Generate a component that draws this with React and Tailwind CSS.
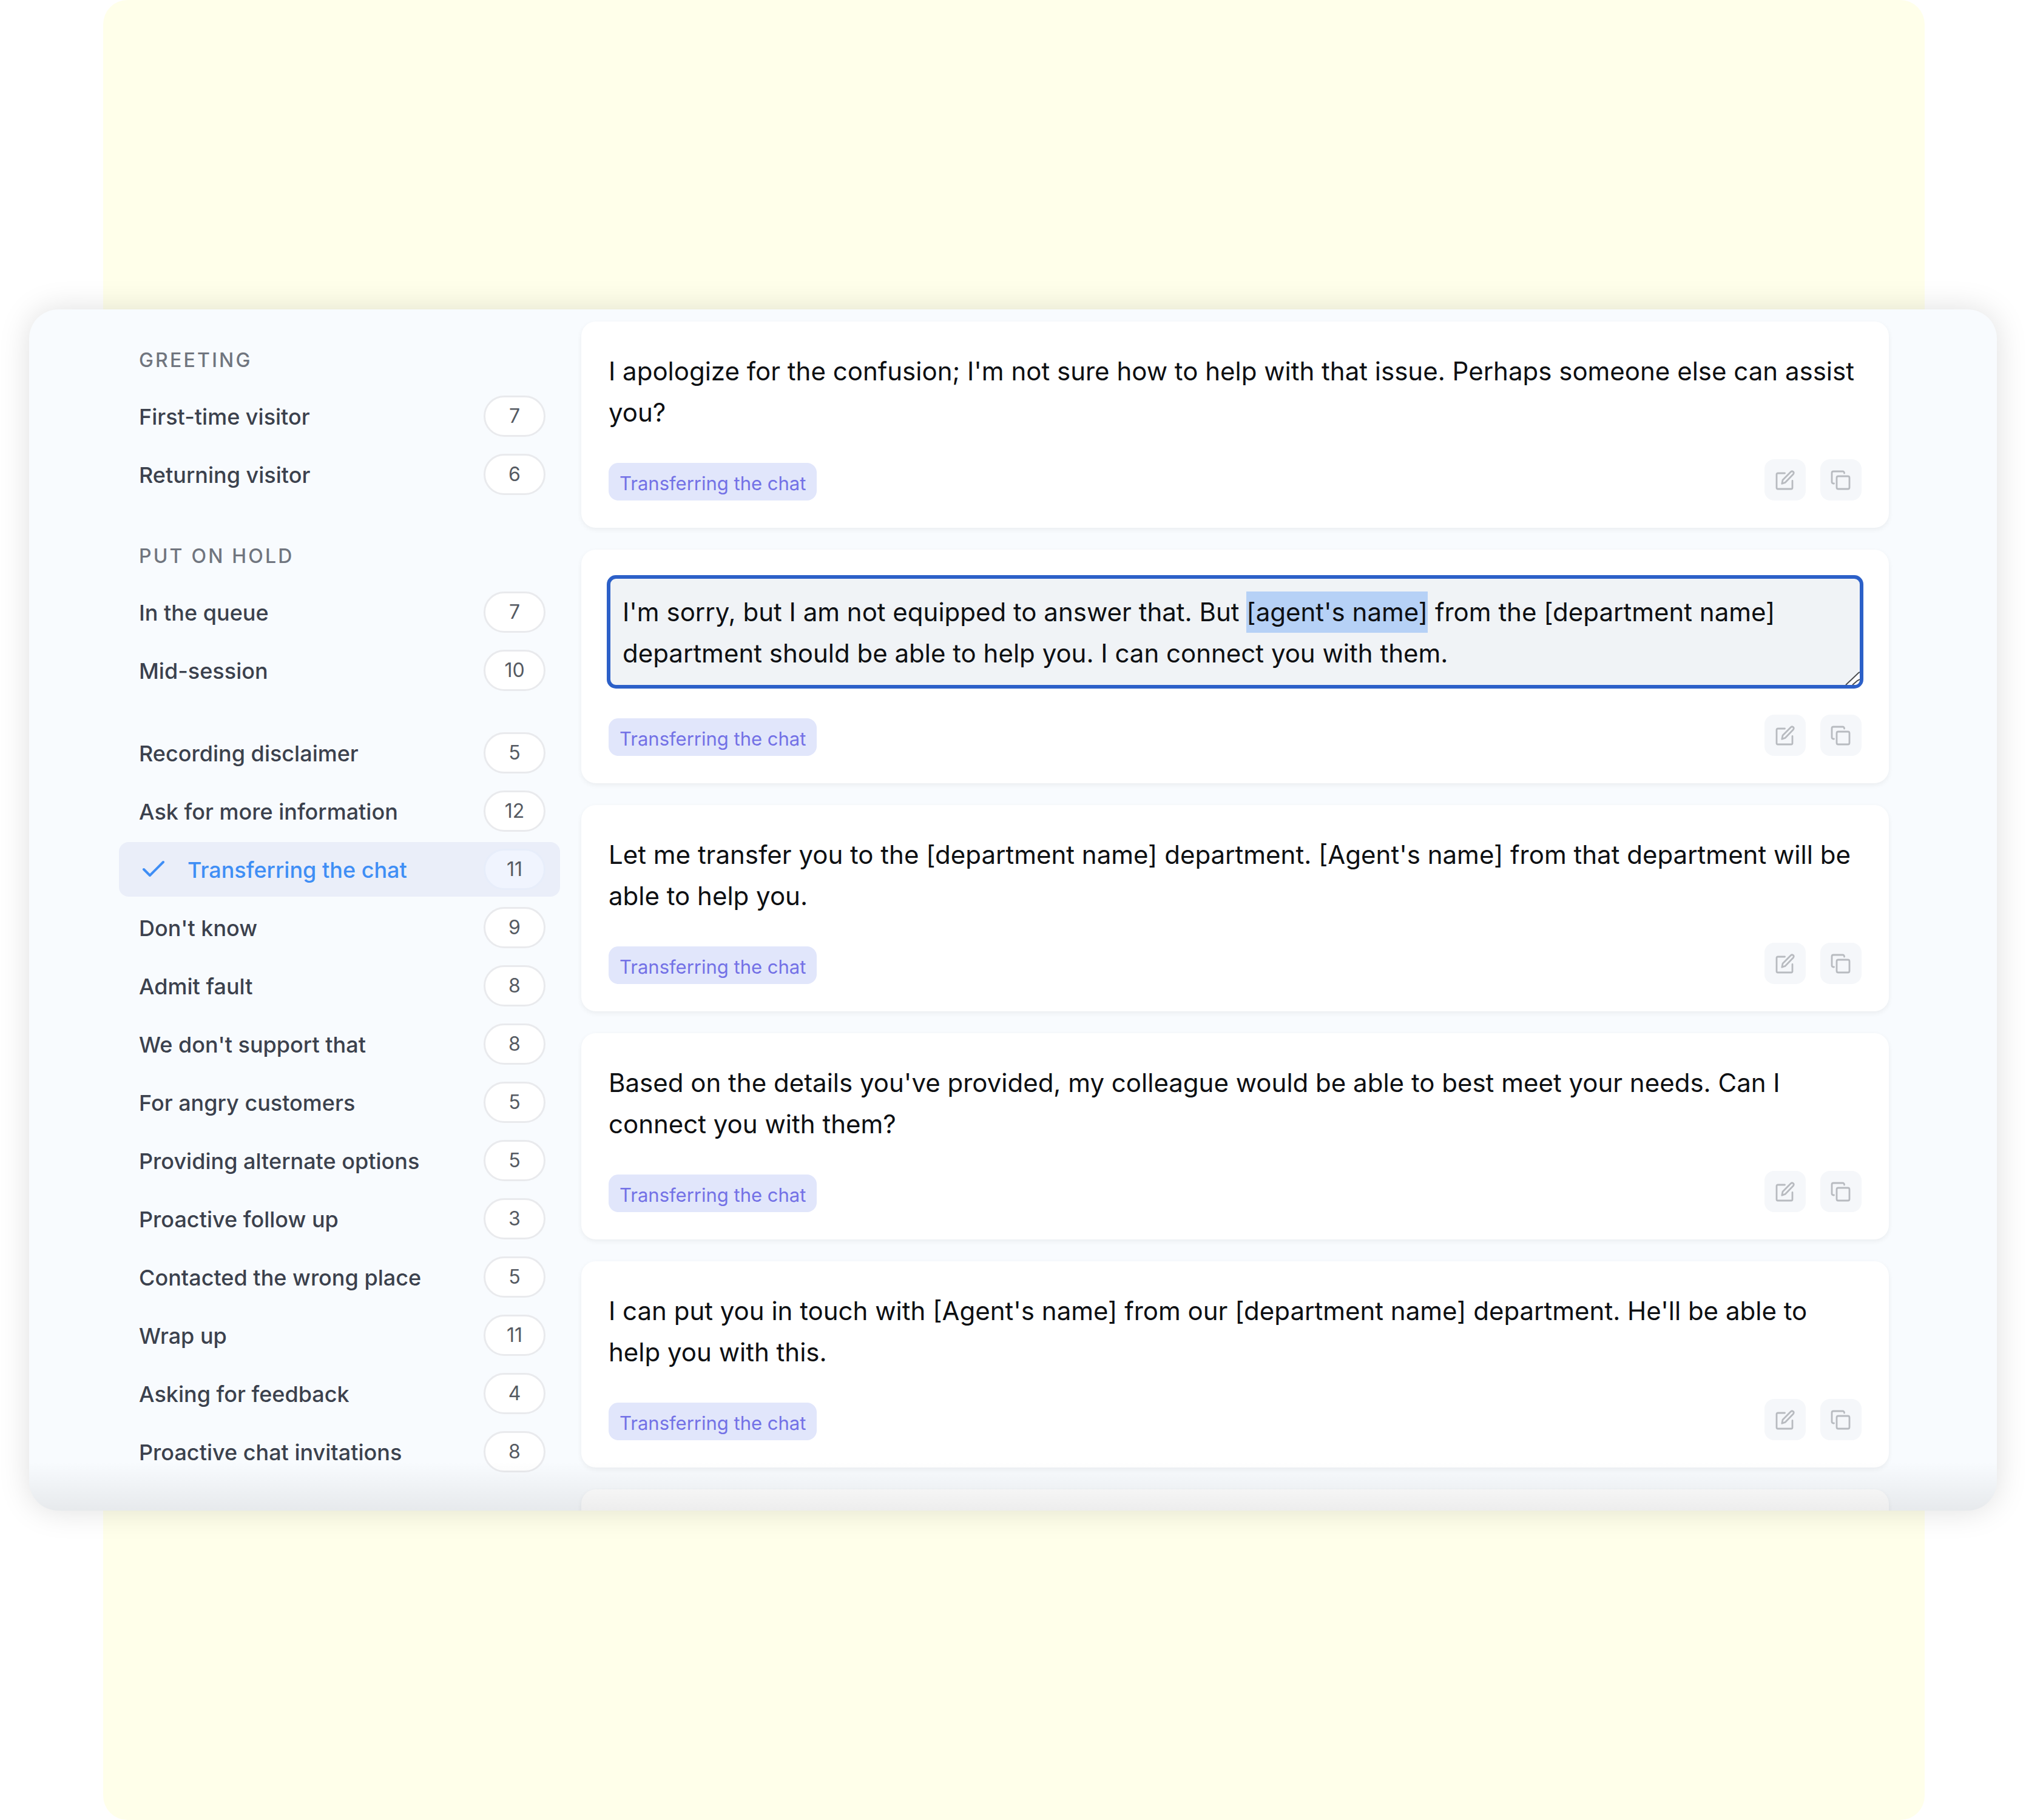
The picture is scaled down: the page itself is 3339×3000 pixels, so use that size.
import React, { useEffect, useRef, useState } from 'react';
import clsx from 'clsx';
import { Check } from 'lucide-react';

const CATEGORY_GROUPS = [
  {
    title: 'Greeting',
    items: [
      { name: 'First-time visitor', count: 7 },
      { name: 'Returning visitor', count: 6 },
    ],
  },
  {
    title: 'Put on hold',
    items: [
      { name: 'In the queue', count: 7 },
      { name: 'Mid-session', count: 10 },
    ],
  },
  {
    items: [
      { name: 'Recording disclaimer', count: 5 },
      { name: 'Ask for more information', count: 12 },
      { name: 'Transferring the chat', count: 11 },
      { name: "Don't know", count: 9 },
      { name: 'Admit fault', count: 8 },
      { name: "We don't support that", count: 8 },
      { name: 'For angry customers', count: 5 },
      { name: 'Providing alternate options', count: 5 },
      { name: 'Proactive follow up', count: 3 },
      { name: 'Contacted the wrong place', count: 5 },
      { name: 'Wrap up', count: 11 },
      { name: 'Asking for feedback', count: 4 },
      { name: 'Proactive chat invitations', count: 8 },
    ],
  },
];

const RESPONSES = [
  { id: 1, text: "I apologize for the confusion; I'm not sure how to help with that issue. Perhaps someone else can assist you?" },
  {
    id: 2,
    text: "I'm sorry, but I am not equipped to answer that. But [agent's name] from the [department name] department should be able to help you. I can connect you with them.",
    editing: true,
    placeholder: "[agent's name]",
  },
  { id: 3, text: "Let me transfer you to the [department name] department. [Agent's name] from that department will be able to help you." },
  { id: 4, text: "Based on the details you've provided, my colleague would be able to best meet your needs. Can I connect you with them?" },
  { id: 5, text: "I can put you in touch with [Agent's name] from our [department name] department. He'll be able to help you with this." },
];

function EditIcon() {
  return (
    <svg viewBox="0 0 36 36" className="size-9" fill="none" stroke="currentColor" strokeWidth="2.8" strokeLinecap="round" strokeLinejoin="round" aria-hidden="true">
      <path d="M17.5 7H6a2 2 0 0 0-2 2v22a2 2 0 0 0 2 2h22a2 2 0 0 0 2-2V19.500" />
      <path d="M12.800 24.200l1.200-6L27.400 4.800a2.700 2.700 0 0 1 4.600 2.700a3 3 0 0 1-.7 1.300L18 22.400z" />
    </svg>
  );
}

function CopyIcon() {
  return (
    <svg viewBox="0 0 36 36" className="size-9" fill="none" stroke="currentColor" strokeWidth="2.8" strokeLinecap="round" strokeLinejoin="round" aria-hidden="true">
      <rect x="11" y="12" width="21" height="21" rx="2.5" />
      <path d="M6.5 24H5.500A2.5 2.5 0 0 1 3 21.500V6.500A2.5 2.5 0 0 1 5.500 4H21a2.5 2.5 0 0 1 2.500 2.500V7" />
    </svg>
  );
}

function ResizeHandle() {
  return (
    <svg viewBox="0 0 24 24" className="pointer-events-none absolute right-[3px] bottom-[3px] size-6 rounded-br-lg" fill="none" stroke="#4b4d50" strokeWidth="2" aria-hidden="true">
      <path d="M1 24L24 2V24Z" fill="#fff" stroke="none" />
      <path d="M1 24L22 4L24 3M12 24L20 17L24 15" />
    </svg>
  );
}

function IconButton({ label, children }) {
  return (
    <button type="button" aria-label={label} className="flex size-[68px] items-center justify-center rounded-2xl bg-[#f5f7fa] text-[#b8bbc0]">
      {children}
    </button>
  );
}

function CategoryItem({ name, count, active, onSelect }) {
  return (
    <li>
      <button
        type="button"
        onClick={onSelect}
        aria-pressed={active}
        className={clsx('flex h-[90px] w-full items-center rounded-2xl pr-6 pl-[33px] text-left', active && 'bg-[#eaeef9]')}
      >
        {active && <Check className="mr-8 size-12 shrink-0 text-[#3f8ef5]" strokeWidth={2} />}
        <span className={clsx('flex-1 pt-0.5 text-[36px] leading-[48px] font-medium', active ? 'text-[#3f8ef5]' : 'text-[#3b414d]')}>{name}</span>
        <span
          className={clsx(
            'flex h-[68px] w-[102px] items-center justify-center rounded-full border-3 text-[32px] text-[#555a62]',
            active ? 'border-[#e7edfa] bg-[#f0f4fe]' : 'border-[#e9eaed] bg-white',
          )}
        >
          {count}
        </span>
      </button>
    </li>
  );
}

function EditableText({ response }) {
  const ref = useRef(null);
  const [value, setValue] = useState(response.text);

  // Preselect the placeholder so that the agent can type over it
  useEffect(() => {
    const start = response.text.indexOf(response.placeholder);
    ref.current.focus();
    ref.current.setSelectionRange(start, start + response.placeholder.length);
  }, [response]);

  return (
    <div className="relative">
      <textarea
        ref={ref}
        rows={2}
        aria-label="Edit response"
        value={value}
        onChange={(e) => setValue(e.target.value)}
        className="block h-[181px] w-full resize-none overflow-hidden rounded-xl border-3 border-[#2c60c8] bg-[#f0f3f6] px-5 pt-[21px] text-[42px] leading-[68px] text-[#0d0f12] ring-3 ring-[#2c60c8] outline-none selection:bg-[#b6d1f6] selection:text-[#0d0f12]"
      />
      <ResizeHandle />
    </div>
  );
}

function ResponseCard({ response, category }) {
  return (
    <article className="flex shrink-0 flex-col gap-[46px] rounded-3xl bg-white p-[45px] shadow-[0_3px_8px_rgba(0,0,0,0.06)]">
      {response.editing ? (
        <EditableText response={response} />
      ) : (
        <p className="-mb-[3px] pt-[3px] text-[42px] leading-[68px] text-[#0d0f12]">{response.text}</p>
      )}
      <div className="flex items-end justify-between">
        <span className="rounded-2xl bg-[#e1e6fb] px-[18px] pt-1.5 text-[31px] leading-[56px] text-[#7371e6]">{category}</span>
        <div className="flex gap-6">
          <IconButton label="Edit response">
            <EditIcon />
          </IconButton>
          <IconButton label="Copy response">
            <CopyIcon />
          </IconButton>
        </div>
      </div>
    </article>
  );
}

export default function App() {
  const [selected, setSelected] = useState('Transferring the chat');

  return (
    <div className="grid min-h-screen bg-white font-['Inter',sans-serif]">
      <div className="col-start-1 row-start-1 mr-[5%] ml-[5.1%] rounded-[40px] bg-[#ffffea]" />

      <main className="relative col-start-1 row-start-1 mx-12 flex h-[66vh] gap-[35px] self-center overflow-hidden rounded-[48px] bg-[#f8fbfe] pr-[178px] pl-[148px] shadow-[0_0_52px_rgba(0,0,0,0.13)]">
        <nav aria-label="Response categories" className="flex w-[727px] shrink-0 flex-col gap-[46px] pt-10">
          {CATEGORY_GROUPS.map((group, i) => (
            <section key={group.title || i}>
              {group.title && (
                <h2 className="flex h-[91px] items-center pb-1 pl-[33px] text-[32px] font-medium tracking-widest text-[#70757e] uppercase">
                  {group.title}
                </h2>
              )}
              <ul className="flex flex-col gap-1.5">
                {group.items.map((item) => (
                  <CategoryItem key={item.name} {...item} active={item.name === selected} onSelect={() => setSelected(item.name)} />
                ))}
              </ul>
            </section>
          ))}
        </nav>

        <div className="flex flex-1 flex-col gap-9 pt-5">
          {RESPONSES.map((response) => (
            <ResponseCard key={response.id} response={response} category={selected} />
          ))}
          <div className="h-[340px] shrink-0 rounded-3xl bg-white shadow-[0_3px_8px_rgba(0,0,0,0.06)]" />
        </div>

        {/* Fade hinting at more content below */}
        <div className="pointer-events-none absolute inset-x-0 bottom-0 h-20 bg-gradient-to-t from-black/7 to-transparent" />
      </main>
    </div>
  );
}
